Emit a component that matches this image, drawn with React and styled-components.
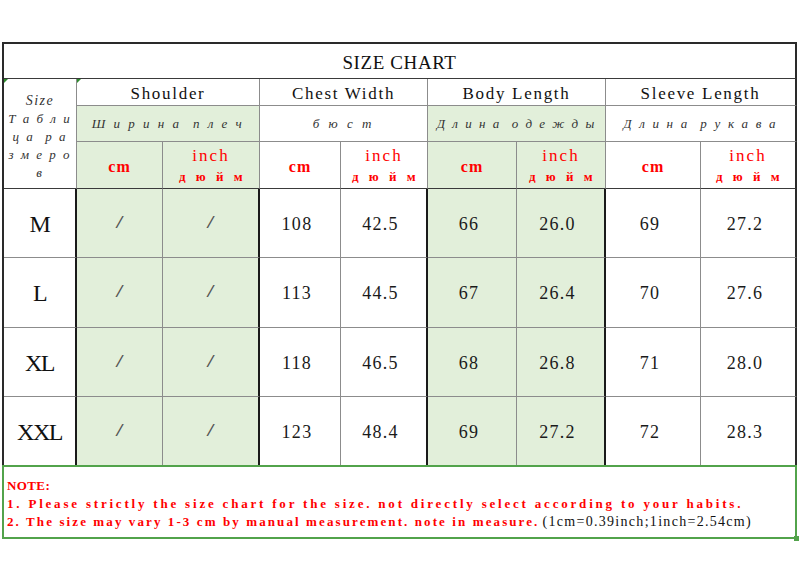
import React from "react";
import styled, { createGlobalStyle } from "styled-components";

const serif = `"Liberation Serif", "DejaVu Serif", serif`;
const mono = `"Liberation Mono", "DejaVu Sans Mono", monospace`;

const GlobalStyle = createGlobalStyle`
  html, body {
    margin: 0;
    padding: 0;
    background: #fff;
  }
  body {
    font-family: ${serif};
    color: #111;
  }
`;

const Page = styled.div`
  width: 800px;
  height: 580px;
  padding: 42px 0 0 2px;
  box-sizing: border-box;
`;

const Chart = styled.div`
  display: grid;
  grid-template-columns: 73px 86px 97px 81px 87px 89px 89px 95px 96px;
  grid-template-rows: 35px 27px 36px 47px 69px 70px 69px 68px;
  width: 795px;
  box-sizing: border-box;
  border-left: 2px solid #2a2a2a;
  border-top: 2px solid #2a2a2a;
`;

const Cell = styled.div`
  position: relative;
  display: flex;
  flex-direction: column;
  align-items: center;
  justify-content: center;
  box-sizing: border-box;
  grid-column: span ${p => p.$span || 1};
  grid-row: span ${p => p.$rows || 1};
  padding-top: ${p => p.$pad || 0};
  background: ${p => (p.$green ? "#e2efda" : "#fff")};
  border-right: ${p =>
    p.$edge
      ? "2px solid #2a2a2a"
      : p.$strong
      ? "2px solid #1a1a1a"
      : "1px solid #8c8c8c"};
  border-bottom: ${p =>
    p.$last ? "none" : p.$dark ? "1px solid #3a3a3a" : "1px solid #8c8c8c"};
`;

const Mark = styled.span`
  position: absolute;
  top: 0;
  left: 0;
  width: 0;
  height: 0;
  border-top: 4px solid #2e8b2e;
  border-right: 4px solid transparent;
`;

const Title = styled.span`
  font-size: 19px;
  letter-spacing: 0.6px;
  color: #111;
  margin-top: 3px;
`;

const GroupName = styled.span`
  font-size: 17px;
  letter-spacing: 1.7px;
  color: #111;
`;

const Russian = styled.span`
  font-style: italic;
  font-size: 13px;
  letter-spacing: ${p => p.$spacing}px;
  color: #333;
  white-space: pre;
`;

const SizeHead = styled.div`
  display: flex;
  flex-direction: column;
  align-items: center;
  font-style: italic;
  font-size: 13px;
  line-height: 18px;
  color: #333;
  white-space: pre;
  margin-top: 6px;
`;

const SizeWord = styled.span`
  font-size: 14px;
  letter-spacing: 1.5px;
`;

const SizeLines = styled.span`
  letter-spacing: 2px;
`;

const Unit = styled.span`
  font-weight: bold;
  font-size: 16px;
  letter-spacing: 1px;
  color: #f00;
  margin-top: 4px;
`;

const Inch = styled.span`
  font-size: 17px;
  letter-spacing: 2px;
  color: #f00;
  line-height: 20px;
  margin-top: 4px;
`;

const Duim = styled.span`
  font-weight: bold;
  font-size: 13px;
  letter-spacing: 3.5px;
  color: #f00;
  line-height: 22px;
  white-space: pre;
  margin-left: 3px;
`;

const SizeLabel = styled.span`
  font-size: 24px;
  color: #111;
  letter-spacing: -1.5px;
  margin-top: 2px;
`;

const Value = styled.span`
  font-size: 18px;
  letter-spacing: 1.3px;
  color: #1a1a1a;
  margin-right: 6px;
  margin-top: 2px;
`;

const Slash = styled.span`
  font-family: ${mono};
  font-size: 17px;
  color: #555;
`;

const Note = styled.div`
  position: relative;
  width: 795px;
  height: 74px;
  box-sizing: border-box;
  border: 2px solid #52a34b;
  padding: 10px 0 0 3px;
  font-size: 13px;
  line-height: 18px;
`;

const NoteLine = styled.div`
  color: #f00;
  font-weight: bold;
  letter-spacing: ${p => p.$spacing || 2}px;
  white-space: pre;
`;

const Plain = styled.span`
  color: #111;
  font-weight: normal;
  font-size: 14px;
  letter-spacing: 1.3px;
  margin-left: 3px;
`;

const Handle = styled.span`
  position: absolute;
  right: -4px;
  bottom: -4px;
  width: 5px;
  height: 5px;
  background: #52a34b;
`;

const rows = [
  { size: "M", chest: ["108", "42.5"], body: ["66", "26.0"], sleeve: ["69", "27.2"] },
  { size: "L", chest: ["113", "44.5"], body: ["67", "26.4"], sleeve: ["70", "27.6"] },
  { size: "XL", chest: ["118", "46.5"], body: ["68", "26.8"], sleeve: ["71", "28.0"] },
  { size: "XXL", chest: ["123", "48.4"], body: ["69", "27.2"], sleeve: ["72", "28.3"] },
];

const groups = [
  { name: "Shoulder", ru: "Ш и р и н а  п л е ч", spacing: 2.5, green: true },
  { name: "Chest Width", ru: "б ю с т", spacing: 3, green: false },
  { name: "Body Length", ru: "Д л и н а  о д е ж д ы", spacing: 2, green: true },
  { name: "Sleeve Length", ru: "Д л и н а  р у к а в а", spacing: 2.2, green: false },
];

const UnitPair = ({ green, edge }) => (
  <>
    <Cell $green={green} $dark>
      <Unit>cm</Unit>
    </Cell>
    <Cell $green={green} $dark $edge={edge}>
      <Inch>inch</Inch>
      <Duim>д ю й м</Duim>
    </Cell>
  </>
);

export default function App() {
  return (
    <>
      <GlobalStyle />
      <Page>
        <Chart>
          <Cell $span={9} $edge $dark>
            <Title>SIZE CHART</Title>
          </Cell>

          <Cell $rows={3} $dark>
            <Mark />
            <SizeHead>
              <SizeWord>Size</SizeWord>
              <SizeLines>Т а б л и</SizeLines>
              <SizeLines>ц а  р а</SizeLines>
              <SizeLines>з м е р о</SizeLines>
              <SizeLines>в</SizeLines>
            </SizeHead>
          </Cell>
          {groups.map((g, i) => (
            <Cell key={g.name} $span={2} $edge={i === 3} $pad="3px">
              {i === 0 && <Mark />}
              <GroupName>{g.name}</GroupName>
            </Cell>
          ))}
          {groups.map((g, i) => (
            <Cell key={g.ru} $span={2} $green={g.green} $edge={i === 3}>
              <Russian $spacing={g.spacing}>{g.ru}</Russian>
            </Cell>
          ))}
          {groups.map((g, i) => (
            <UnitPair key={g.name + "u"} green={g.green} edge={i === 3} />
          ))}

          {rows.map((r, ri) => {
            const last = ri === rows.length - 1;
            return (
              <React.Fragment key={r.size}>
                <Cell $strong $last={last}>
                  <SizeLabel>{r.size}</SizeLabel>
                </Cell>
                <Cell $green $last={last}>
                  <Slash>/</Slash>
                </Cell>
                <Cell $green $strong $last={last}>
                  <Slash>/</Slash>
                </Cell>
                <Cell $last={last}>
                  <Value>{r.chest[0]}</Value>
                </Cell>
                <Cell $strong $last={last}>
                  <Value>{r.chest[1]}</Value>
                </Cell>
                <Cell $green $last={last}>
                  <Value>{r.body[0]}</Value>
                </Cell>
                <Cell $green $strong $last={last}>
                  <Value>{r.body[1]}</Value>
                </Cell>
                <Cell $last={last}>
                  <Value>{r.sleeve[0]}</Value>
                </Cell>
                <Cell $edge $last={last}>
                  <Value>{r.sleeve[1]}</Value>
                </Cell>
              </React.Fragment>
            );
          })}
        </Chart>
        <Note>
          <NoteLine $spacing={0.4}>NOTE:</NoteLine>
          <NoteLine $spacing={2.8}>
            1. Please strictly the size chart for the size. not directly select according to your habits.
          </NoteLine>
          <NoteLine $spacing={2.1}>
            2. The size may vary 1-3 cm by manual measurement. note in measure.
            <Plain>(1cm=0.39inch;1inch=2.54cm)</Plain>
          </NoteLine>
          <Handle />
        </Note>
      </Page>
    </>
  );
}
